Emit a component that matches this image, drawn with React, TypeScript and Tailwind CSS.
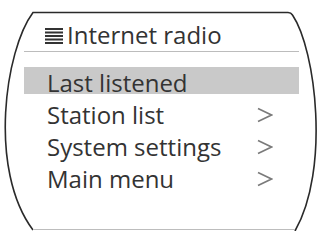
import React from "react";

const ITEMS = [
  { label: "Last listened", active: true, arrow: false },
  { label: "Station list", active: false, arrow: true },
  { label: "System settings", active: false, arrow: true },
  { label: "Main menu", active: false, arrow: true },
];

function MenuIcon() {
  return (
    <svg width="18" height="16" viewBox="0 0 18 16" className="shrink-0">
      {[0, 3.5, 7, 10.5, 14].map((y) => (
        <rect key={y} x="0" y={y} width="18" height="2" fill="#333" />
      ))}
    </svg>
  );
}

function Chevron() {
  return (
    <svg width="16" height="16" viewBox="0 0 16 16" className="mt-[6px] shrink-0">
      <path d="M1 1.5 L14.5 8 L1 14.5" stroke="#7a7a7a" strokeWidth="1.6" fill="none" />
    </svg>
  );
}

// outline of the radio display
function DisplayFrame() {
  return (
    <svg
      className="absolute inset-0 pointer-events-none"
      width="320"
      height="231"
      viewBox="0 0 320 231"
      fill="none"
    >
      <path
        d="M33 230 C -12 170 5 50 33 12.5 L288 12.5 Q291 12.5 292.5 15 C 316 50 330 170 295 231"
        stroke="#2a2a2a"
        strokeWidth="1.6"
      />
      <path d="M33 229.5 L295 229.5" stroke="#bdbdbd" strokeWidth="1" />
    </svg>
  );
}

export default function App() {
  return (
    <div
      className="relative w-[320px] h-[231px] overflow-hidden bg-white text-[#333]"
      style={{ fontFamily: '"Open Sans", "Noto Sans", sans-serif' }}
    >
      <DisplayFrame />
      <div className="pl-[24px] pr-[21px] pt-[20px]">
        <div className="flex items-center h-[32px] pl-[21px] border-b border-[#bcbcbc]">
          <MenuIcon />
          <span className="ml-[4px] text-[24px] leading-[27px] pb-[2px]">Internet radio</span>
        </div>
        <div className="mt-[15px] flex flex-col gap-[5px]">
          {ITEMS.map((it) => (
            <div
              key={it.label}
              className={
                "flex items-start justify-between h-[27px] pl-[23px] pr-[26px] pt-[2px] text-[24px] leading-[27px] " +
                (it.active ? "bg-[#c9c9c9]" : "")
              }
            >
              <span>{it.label}</span>
              {it.arrow && <Chevron />}
            </div>
          ))}
        </div>
      </div>
    </div>
  );
}
